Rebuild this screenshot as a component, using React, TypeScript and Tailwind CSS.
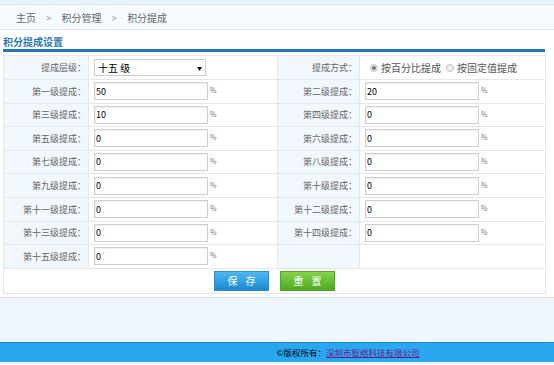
import React from 'react'

const font = {fontFamily: '"Noto Sans CJK SC", "Noto Sans", sans-serif'}

const rows: [string, string, string | null, string | null][] = [
	['第一级提成：', '50', '第二级提成：', '20'],
	['第三级提成：', '10', '第四级提成：', '0'],
	['第五级提成：', '0', '第六级提成：', '0'],
	['第七级提成：', '0', '第八级提成：', '0'],
	['第九级提成：', '0', '第十级提成：', '0'],
	['第十一级提成：', '0', '第十二级提成：', '0'],
	['第十三级提成：', '0', '第十四级提成：', '0'],
	['第十五级提成：', '0', null, null],
]

const Label = ({children}: {children?: React.ReactNode}) => (
	<td className="bg-[#f0f7fd] border border-[#e4e8ec] text-right pr-[2px] text-[9px] text-[#666] align-middle">
		{children}
	</td>
)

const ValueInput = ({value}: {value: string}) => (
	<td className="border border-[#e4e8ec] align-middle pl-[5px]">
		<div className="flex items-start">
			<div className="h-[18px] w-[114px] border border-[#cfcfcf] bg-white shadow-[inset_1px_1px_1px_rgba(0,0,0,0.06)] flex items-center pl-[1px] text-[9px] text-black">
				{value}
			</div>
			<span className="ml-[2px] mt-[3px] text-[7px] text-[#777]">%</span>
		</div>
	</td>
)

const Radio = ({checked, label}: {checked?: boolean; label: string}) => (
	<span className="flex items-center gap-[3px]">
		<span className="w-[8px] h-[8px] rounded-full border border-[#c4c4c4] bg-[#eee] flex items-center justify-center">
			{checked && <span className="w-[4px] h-[4px] rounded-full bg-[#777]" />}
		</span>
		<span className="text-[10px] text-[#555]">{label}</span>
	</span>
)

export default function App() {
	return (
		<div className="w-[554px] h-[365px] bg-[#eef7fe] overflow-hidden" style={font}>
			<div className="h-[5px] bg-[#e8f4fc] border-b border-[#dfe3e6]" />
			<div className="h-[25px] bg-[#f5fbff] border-b border-[#e0e3e6] flex items-center pl-[16px] text-[10px] text-[#666]">
				<span>主页</span>
				<span className="mx-[10px] text-[#999]">&gt;</span>
				<span>积分管理</span>
				<span className="mx-[10px] text-[#999]">&gt;</span>
				<span>积分提成</span>
			</div>
			<div className="bg-white border-b border-[#dde1e4] h-[268px] pl-[3px]">
				<div className="pt-[4px] h-[19px] text-[10px] font-bold text-[#2b77b6] leading-[15px]">积分提成设置</div>
				<div className="h-[3px] w-[542px] bg-[#1f78b4]" />
				<table className="mt-[3px] w-[542px] border-collapse table-fixed border border-[#e4e8ec]">
					<colgroup>
						<col className="w-[85px]" />
						<col className="w-[189px]" />
						<col className="w-[82px]" />
						<col className="w-[186px]" />
					</colgroup>
					<tbody>
						<tr className="h-[24px]">
							<Label>提成层级：</Label>
							<td className="border border-[#e4e8ec] pl-[5px] align-middle">
								<div className="w-[112px] h-[17px] border border-[#cfcfcf] flex items-center justify-between px-[3px] text-[10px] text-black">
									<span>十五 级</span>
									<span className="text-[5px]">▼</span>
								</div>
							</td>
							<Label>提成方式：</Label>
							<td className="border border-[#e4e8ec] pl-[10px] align-middle">
								<div className="flex items-center gap-[5px]">
									<Radio checked label="按百分比提成" />
									<Radio label="按固定值提成" />
								</div>
							</td>
						</tr>
						{rows.map((r, i) => (
							<tr key={i} className="h-[23.6px]">
								<Label>{r[0]}</Label>
								<ValueInput value={r[1]} />
								<Label>{r[2]}</Label>
								{r[3] !== null ? (
									<ValueInput value={r[3]} />
								) : (
									<td className="border border-[#e4e8ec]" />
								)}
							</tr>
						))}
						<tr className="h-[25px]">
							<td colSpan={4} className="border border-[#e4e8ec] align-top pt-[2px]">
								<div className="flex justify-center gap-[11px]">
									<button className="w-[55px] h-[20px] bg-gradient-to-b from-[#4fb8ef] to-[#1a88d2] text-white text-[10px] tracking-[8px] pl-[8px] border border-[#2a8fd0]">
										保存
									</button>
									<button className="w-[55px] h-[20px] bg-gradient-to-b from-[#85d24c] to-[#4dab1f] text-white text-[10px] tracking-[8px] pl-[8px] border border-[#52a82a]">
										重置
									</button>
								</div>
							</td>
						</tr>
					</tbody>
				</table>
			</div>
			<div className="h-[44px]" />
			<div className="h-[20px] bg-[#29a8f0] border-t border-[#1e8bcf] flex items-center justify-center pl-[142px] text-[8.5px] text-black">
				<span>©版权所有：</span>
				<span className="text-[#6b1a8a] underline">深圳市智络科技有限公司</span>
			</div>
		</div>
	)
}
